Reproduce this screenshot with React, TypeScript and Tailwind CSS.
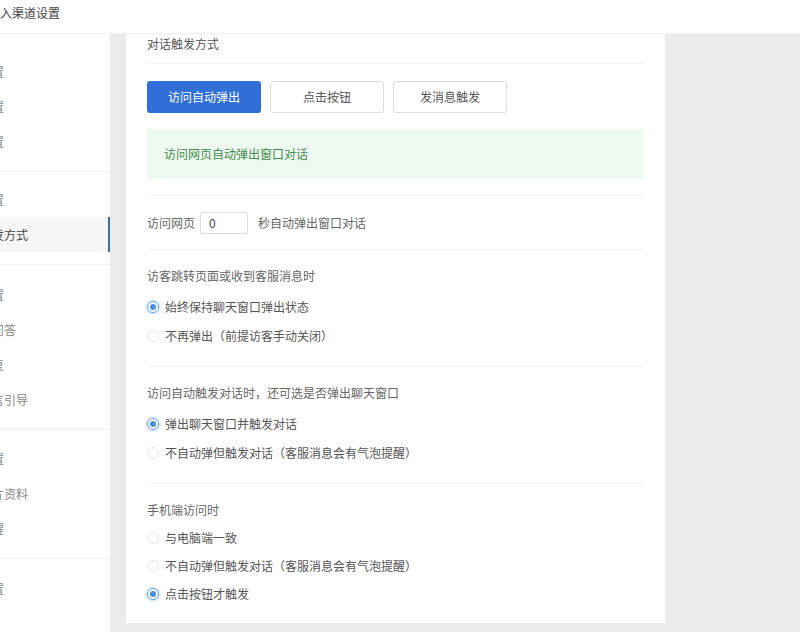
import React from "react";

const groups: { pt: string; items: string[] }[] = [
  { pt: "pt-5", items: ["基础设置", "风格设置", "图标设置"] },
  { pt: "pt-[10px]", items: ["邀请设置", "对话触发方式"] },
  { pt: "pt-3", items: ["留言设置", "机器人问答", "快捷回复", "访客留言引导"] },
  { pt: "pt-[11px]", items: ["访客设置", "访客名片资料", "消息提醒"] },
  { pt: "pt-3", items: ["其他设置"] },
];

const ACTIVE = "对话触发方式";

function Radio({ checked, label }: { checked?: boolean; label: string }) {
  return (
    <div className="flex h-[29px] items-center gap-[6px]">
      {checked ? (
        <span className="flex h-3 w-3 items-center justify-center rounded-full border border-[#5b9be6] shadow-[0_0_0_2px_#e3eefb]">
          <span className="h-[6px] w-[6px] rounded-full bg-[#4a8fe0]" />
        </span>
      ) : (
        <span className="h-3 w-3 rounded-full border border-[#e6e6e6]" />
      )}
      <span className="text-[#555]">{label}</span>
    </div>
  );
}

function Section({
  title,
  options,
  tight,
}: {
  title: string;
  options: { label: string; checked?: boolean }[];
  tight?: boolean;
}) {
  return (
    <div className="border-t border-[#f0f0f0] pt-[14px] pb-4">
      <div className="flex h-6 items-center text-[#666]">{title}</div>
      <div className={tight ? "mt-0.5 [&>div]:h-[28px]" : "mt-1"}>
        {options.map((o) => (
          <Radio key={o.label} label={o.label} checked={o.checked} />
        ))}
      </div>
    </div>
  );
}

export default function App() {
  return (
    <div className="h-[632px] w-[800px] overflow-hidden bg-[#ebebeb] font-['Noto_Sans_CJK_SC',sans-serif] text-[12px]">
      <header className="flex h-[34px] items-center overflow-hidden border-b border-[#eeeeee] bg-white">
        <h1 className="-ml-[12px] -mt-[8px] whitespace-nowrap text-[12px] text-[#444]">接入渠道设置</h1>
      </header>

      <div className="flex">
        <aside className="h-[598px] w-[110px] shrink-0 overflow-hidden bg-white">
          {groups.map((g, gi) => (
            <div key={gi} className={`${g.pt} pb-3 ${gi < groups.length - 1 ? "border-b border-[#f0f0f0]" : ""}`}>
              {g.items.map((item) => {
                const active = item === ACTIVE;
                return (
                  <div
                    key={item}
                    className={`flex h-[35px] items-center whitespace-nowrap ${
                      active ? "border-r-2 border-[#3d6ea8] bg-[#f6f6f6] text-[#444]" : "text-[#888]"
                    }`}
                  >
                    <span className="-ml-[44px]">{item}</span>
                  </div>
                );
              })}
            </div>
          ))}
        </aside>

        <main className="ml-4 h-[589px] w-[539px] shrink-0 bg-white px-[21px]">
          <div className="border-b border-[#f0f0f0] pb-[9px]">
            <div className="flex h-5 items-center text-[#555]">对话触发方式</div>
          </div>

          <div className="mt-[17px] flex gap-[9px]">
            <button className="h-8 w-[114px] rounded-[3px] bg-[#2f6fd7] text-white">访问自动弹出</button>
            <button className="h-8 w-[114px] rounded-[3px] border border-[#dddddd] bg-white text-[#555]">点击按钮</button>
            <button className="h-8 w-[114px] rounded-[3px] border border-[#dddddd] bg-white text-[#555]">发消息触发</button>
          </div>

          <div className="mt-4 flex h-[50px] items-center bg-[#eefaf0] pl-[17px] text-[#3e8a4d]">访问网页自动弹出窗口对话</div>

          <div className="mt-4 flex h-[54px] items-center border-t border-[#f0f0f0] text-[#666]">
            <span>访问网页</span>
            <span className="ml-[5px] flex h-[22px] w-12 items-center rounded-[2px] border border-[#dddddd] pl-2 text-[#444]">0</span>
            <span className="ml-[10px]">秒自动弹出窗口对话</span>
          </div>

          <Section
            title="访客跳转页面或收到客服消息时"
            options={[{ label: "始终保持聊天窗口弹出状态", checked: true }, { label: "不再弹出（前提访客手动关闭）" }]}
          />
          <Section
            title="访问自动触发对话时，还可选是否弹出聊天窗口"
            options={[{ label: "弹出聊天窗口并触发对话", checked: true }, { label: "不自动弹但触发对话（客服消息会有气泡提醒）" }]}
          />
          <Section
            title="手机端访问时"
            tight
            options={[
              { label: "与电脑端一致" },
              { label: "不自动弹但触发对话（客服消息会有气泡提醒）" },
              { label: "点击按钮才触发", checked: true },
            ]}
          />
        </main>
      </div>
    </div>
  );
}
